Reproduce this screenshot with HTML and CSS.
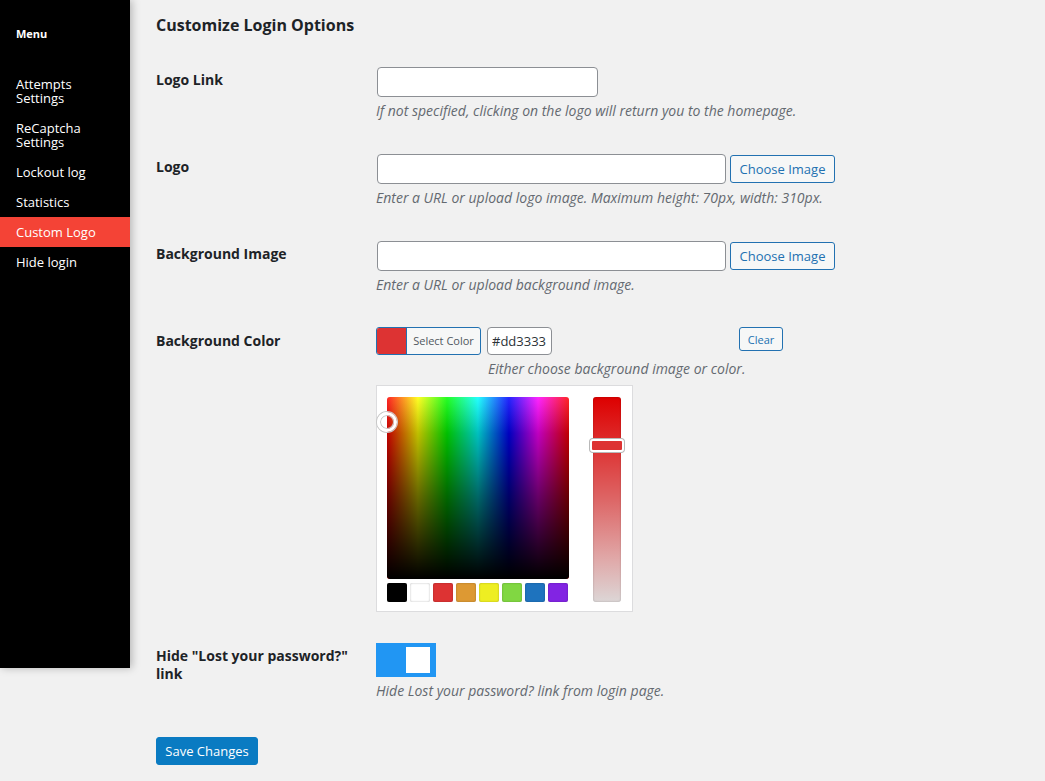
FILE: index.html
```html
<!DOCTYPE html>
<html>
<head>
<meta charset="utf-8">
<link rel="stylesheet" href="styles.css">
</head>
<body>
<div class="layout">
  <nav class="sidebar">
    <div class="menu-title">Menu</div>
    <ul class="menu">
      <li class="item">Attempts Settings</li>
      <li class="item">ReCaptcha Settings</li>
      <li class="item">Lockout log</li>
      <li class="item">Statistics</li>
      <li class="item active">Custom Logo</li>
      <li class="item">Hide login</li>
    </ul>
  </nav>
  <main class="main">
    <h2 class="title">Customize Login Options</h2>
    <div class="form">
      <div class="row">
        <div class="label">Logo Link</div>
        <div class="field">
          <input class="text short" type="text">
          <p class="desc">If not specified, clicking on the logo will return you to the homepage.</p>
        </div>
      </div>
      <div class="row">
        <div class="label">Logo</div>
        <div class="field">
          <div class="inline">
            <input class="text long" type="text">
            <button class="btn">Choose Image</button>
          </div>
          <p class="desc">Enter a URL or upload logo image. Maximum height: 70px, width: 310px.</p>
        </div>
      </div>
      <div class="row">
        <div class="label">Background Image</div>
        <div class="field">
          <div class="inline">
            <input class="text long" type="text">
            <button class="btn">Choose Image</button>
          </div>
          <p class="desc">Enter a URL or upload background image.</p>
        </div>
      </div>
      <div class="row color-row">
        <div class="label">Background Color</div>
        <div class="field">
          <div class="inline color-line">
            <button class="color-result"><span class="swatch"></span><span class="color-text">Select Color</span></button>
            <input class="text hex" type="text" value="#dd3333">
            <button class="btn small clear">Clear</button>
          </div>
          <p class="desc indent">Either choose background image or color.</p>
          <div class="picker">
            <div class="picker-left">
              <div class="square">
                <div class="square-shade"></div>
                <span class="square-handle"></span>
              </div>
              <div class="palette">
                <span class="pal" style="background:#000000"></span>
                <span class="pal" style="background:#ffffff"></span>
                <span class="pal" style="background:#dd3333"></span>
                <span class="pal" style="background:#dd9933"></span>
                <span class="pal" style="background:#eeee22"></span>
                <span class="pal" style="background:#81d742"></span>
                <span class="pal" style="background:#1e73be"></span>
                <span class="pal" style="background:#8224e3"></span>
              </div>
            </div>
            <div class="slider">
              <span class="slider-handle"></span>
            </div>
          </div>
        </div>
      </div>
      <div class="row">
        <div class="label">Hide "Lost your password?" link</div>
        <div class="field">
          <div class="toggle"><span class="knob"></span></div>
          <p class="desc">Hide Lost your password? link from login page.</p>
        </div>
      </div>
    </div>
    <div class="submit">
      <button class="primary">Save Changes</button>
    </div>
  </main>
</div>
</body>
</html>
```
FILE: styles.css
```css
* { box-sizing: border-box; }
html, body { margin: 0; padding: 0; }
body {
  background: #f1f1f1;
  font-family: "Open Sans", "Noto Sans", sans-serif;
  color: #1d2327;
  font-size: 13px;
}
.layout { display: flex; align-items: flex-start; min-height: 781px; }
.sidebar {
  width: 130px;
  flex: none;
  background: #000;
  color: #fff;
  height: 668px;
  box-shadow: 2px 0 8px rgba(0,0,0,0.25);
  position: relative;
  z-index: 1;
}
.menu-title {
  font-size: 11px;
  font-weight: 700;
  padding: 27px 16px 0;
  line-height: 14px;
  height: 69px;
}
.menu { list-style: none; margin: 0; padding: 0; }
.item {
  font-size: 13px;
  line-height: 14px;
  padding: 8px 16px;
}
.item.active { background: #f44336; }
.main { padding: 0 0 0 26px; flex: 1; }
.title {
  font-size: 16px;
  font-weight: 700;
  margin: 0;
  padding-top: 15px;
  line-height: 20px;
  height: 52px;
}
.row { display: grid; grid-template-columns: 210px 1fr; }
.label {
  font-size: 14px;
  font-weight: 700;
  line-height: 18px;
  padding: 19px 10px 20px 0;
}
.field { padding: 15px 10px 18px; }
.inline { display: flex; align-items: center; gap: 3px; }
.text {
  height: 30px;
  border: 1px solid #8c8f94;
  border-radius: 4px;
  background: #fff;
  margin: 0 1px;
  padding: 0 8px;
  font-family: inherit;
  font-size: 13px;
  color: #2c3338;
  display: block;
}
.short { width: 221px; }
.long { width: 349px; }
.btn {
  height: 28px;
  border: 1px solid #2271b1;
  color: #2271b1;
  background: #f6f7f7;
  border-radius: 3px;
  font-family: inherit;
  font-size: 13px;
  padding: 0;
  width: 105px;
}
.desc {
  margin: 4px 0 0;
  font-style: italic;
  color: #646970;
  font-size: 14px;
  line-height: 20px;
}
.color-row .field { padding-top: 14px; padding-bottom: 16px; }
.color-line { gap: 0; align-items: flex-start; }
.color-result {
  display: flex;
  align-items: stretch;
  height: 28px;
  width: 105px;
  padding: 0;
  border: 1px solid #2271b1;
  border-radius: 3px;
  background: #f6f7f7;
  overflow: hidden;
  font-family: inherit;
}
.swatch { width: 30px; background: #dd3333; border-right: 1px solid #2271b1; }
.color-text {
  flex: 1;
  font-size: 11px;
  color: #50575e;
  line-height: 26px;
  text-align: center;
  white-space: nowrap;
}
.hex { width: 65px; height: 28px; margin-left: 6px; padding: 0 4px; }
.small {
  height: 24px;
  width: 44px;
  padding: 0;
  font-size: 11px;
}
.clear { margin-left: 186px; }
.indent { padding-left: 112px; }
.picker {
  margin-top: 6px;
  width: 257px;
  height: 227px;
  background: #fff;
  border: 1px solid #dcdcde;
  padding: 11px 11px 0 10px;
  display: flex;
  gap: 24px;
}
.picker-left { width: 182px; }
.square {
  width: 182px;
  height: 182px;
  position: relative;
  border-radius: 3px;
  background: linear-gradient(to right, #ff0000, #ffff00 17%, #00ff00 33%, #00ffff 50%, #0000ff 67%, #ff00ff 83%, #ff0000);
}
.square-shade {
  position: absolute;
  inset: 0;
  border-radius: 3px;
  background: linear-gradient(to bottom, rgba(255,255,255,0.15), rgba(0,0,0,0.25) 20%, rgba(0,0,0,0.6) 55%, #000 100%);
}
.square-handle {
  position: absolute;
  left: -10px;
  top: 15px;
  width: 20px;
  height: 20px;
  border-radius: 50%;
  border: 3px solid #fff;
  box-shadow: 0 0 0 1px #c8c8c8, inset 0 0 0 1px #c8c8c8;
}
.palette { display: flex; gap: 3px; margin-top: 4px; }
.pal {
  width: 20px;
  height: 19px;
  border-radius: 2px;
  box-shadow: inset 0 0 2px rgba(0,0,0,0.3);
}
.slider {
  width: 28px;
  height: 205px;
  border-radius: 3px;
  position: relative;
  background: linear-gradient(to bottom, #dd0000, #dd3333 25%, #dd6666 50%, #e0a6a6 78%, #dcd6d6);
  box-shadow: inset 0 0 2px rgba(0,0,0,0.25);
}
.slider-handle {
  position: absolute;
  left: -3px;
  right: -3px;
  top: 42px;
  height: 13px;
  border: 2px solid #fff;
  border-radius: 3px;
  box-shadow: 0 0 0 1px #b8b8b8;
  background: #dd3333;
}
.toggle {
  width: 60px;
  height: 34px;
  background: #2196f3;
  position: relative;
}
.knob {
  position: absolute;
  right: 6px;
  top: 4px;
  width: 24px;
  height: 26px;
  background: #fff;
}
.submit { padding-top: 18px; }
.primary {
  height: 28px;
  width: 102px;
  background: #0a7bc2;
  color: #fff;
  border: 1px solid #0a7bc2;
  border-radius: 3px;
  font-family: inherit;
  font-size: 13px;
  padding: 0;
}
```
